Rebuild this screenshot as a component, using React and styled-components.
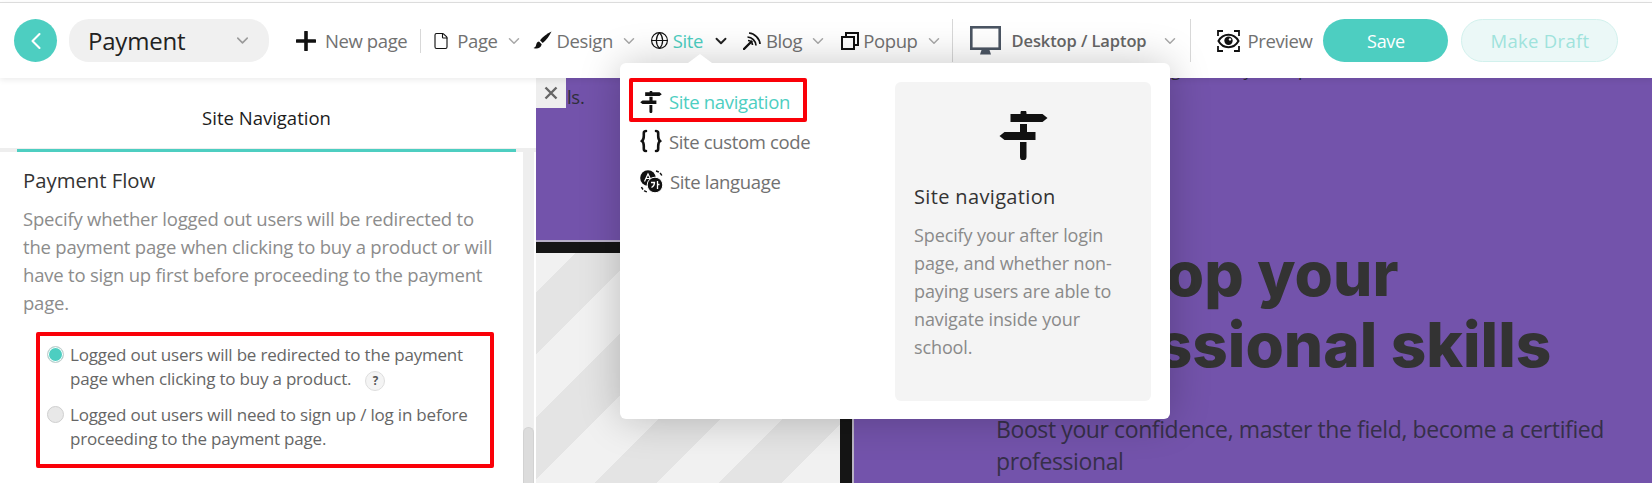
import React from "react";
import styled, { createGlobalStyle } from "styled-components";
import { ChevronDown, ChevronLeft, File, Globe } from "lucide-react";

const Global = createGlobalStyle`
  html, body { margin: 0; padding: 0; background: #fff; }
  body { font-family: "Open Sans", "Noto Sans", sans-serif; overflow: hidden; }
  * { box-sizing: border-box; }
`;

const TEAL = "#4dcec1";
const PURPLE = "#7353ab";

const Page = styled.div`
  position: relative;
  width: 1652px;
  height: 483px;
  overflow: hidden;
  display: flex;
  flex-direction: column;
  padding-top: 2px;
`;
const Header = styled.header`
  position: relative;
  z-index: 2;
  height: 76px;
  flex: none;
  border-top: 1px solid #dcdcdc;
  background: #fff;
  box-shadow: 0 2px 6px rgba(0, 0, 0, 0.08);
  display: flex;
  align-items: center;
  padding: 0 0 0 14px;
`;
const Back = styled.button`
  width: 43px;
  height: 43px;
  border: 0;
  padding: 0;
  border-radius: 50%;
  background: ${TEAL};
  color: #fff;
  display: flex;
  align-items: center;
  justify-content: center;
`;
const PagePill = styled.div`
  width: 200px;
  height: 43px;
  margin-left: 12px;
  border-radius: 20px;
  background: #f0f0f0;
  display: flex;
  align-items: center;
  justify-content: space-between;
  padding: 0 17px 0 19px;
  font-size: 24px;
  letter-spacing: -0.2px;
  color: #222;
`;
const NavItem = styled.div`
  display: flex;
  align-items: center;
  margin-left: ${(p) => p.$ml || 0}px;
  font-size: 18.5px;
  letter-spacing: -0.4px;
  color: ${(p) => (p.$active ? TEAL : "#717171")};
  white-space: nowrap;
  svg.glyph { flex: none; color: #111; margin-right: ${(p) => p.$gap ?? 5}px; }
`;
const Caret = styled(ChevronDown)`
  flex: none;
  margin-left: ${(p) => p.$ml ?? 10}px;
  color: ${(p) => (p.$dark ? "#222" : "#a8a8a8")};
`;
const VLine = styled.div`
  width: 1px;
  height: ${(p) => p.$h}px;
  margin-left: ${(p) => p.$ml}px;
  background: #d8d8d8;
  flex: none;
`;
const DeviceLabel = styled.span`
  font-size: 16.5px;
  font-weight: 600;
  letter-spacing: -0.1px;
  color: #666;
`;
const Save = styled.button`
  width: 125px;
  height: 43px;
  margin-left: 11px;
  border: 0;
  border-radius: 22px;
  background: ${TEAL};
  color: #fff;
  font: 18px "Open Sans", sans-serif;
  letter-spacing: -0.3px;
`;
const Draft = styled.button`
  width: 157px;
  height: 43px;
  margin-left: 13px;
  border: 1px solid #d2f1ed;
  border-radius: 22px;
  background: #ebf8f7;
  color: #9fe3dc;
  font: 18.5px "Open Sans", sans-serif;
  letter-spacing: 0.3px;
`;
const Body = styled.main`
  flex: 1;
  min-height: 0;
  display: flex;
`;
const Side = styled.aside`
  width: 536px;
  flex: none;
  display: flex;
  flex-direction: column;
  background: #fff;
`;
const TabRow = styled.div`
  height: 74px;
  flex: none;
  padding: 0 0 0 17px;
  border-bottom: 4px solid #eeeeee;
  position: relative;
`;
const Tab = styled.div`
  width: 499px;
  height: 74px;
  border-bottom: 3px solid ${TEAL};
  display: flex;
  align-items: center;
  justify-content: center;
  padding-top: 7px;
  font-size: 18.5px;
  letter-spacing: 0;
  color: #1c1c1c;
`;
const SideBody = styled.div`
  flex: 1;
  min-height: 0;
  display: flex;
`;
const Settings = styled.div`
  flex: 1;
  padding: 15px 0 0 23px;
`;
const H3 = styled.h3`
  margin: 0;
  font-size: 20.3px;
  line-height: 26px;
  font-weight: 400;
  letter-spacing: 0;
  color: #333;
`;
const Desc = styled.p`
  margin: 12px 0 0;
  width: 470px;
  font-size: 18.5px;
  line-height: 28px;
  letter-spacing: -0.2px;
  color: #8c8c8c;
`;
const RedBox = styled.div`
  width: 458px;
  height: 136px;
  margin: 15px 0 0 13px;
  border: 4px solid #fa0008;
  border-radius: 2px;
  padding: 7px 0 0 7px;
  display: flex;
  flex-direction: column;
  gap: 12px;
`;
const Option = styled.div`
  display: flex;
  gap: 6px;
  font-size: 17px;
  line-height: 24px;
  letter-spacing: -0.2px;
  color: #666;
`;
const Radio = styled.span`
  width: 17px;
  height: 17px;
  flex: none;
  margin-top: 3px;
  border-radius: 50%;
  border: 1px solid #cfcfcf;
  background: ${(p) => (p.$on ? TEAL : "#e8e8e8")};
  box-shadow: inset 0 0 0 ${(p) => (p.$on ? 1 : 0)}px #fff;
`;
const Help = styled.span`
  display: inline-flex;
  width: 20px;
  height: 20px;
  margin-left: 14px;
  vertical-align: 0;
  border-radius: 50%;
  border: 1px solid #dedede;
  background: #f4f4f4;
  align-items: center;
  justify-content: center;
  font-size: 11.5px;
  font-weight: 700;
  line-height: 1;
  letter-spacing: 0;
  color: #555;
`;
const Track = styled.div`
  width: 11px;
  margin-right: 2px;
  background: #eeeeee;
  display: flex;
  flex-direction: column;
  justify-content: flex-end;
`;
const Thumb = styled.div`
  height: 56px;
  border-radius: 6px 6px 0 0;
  background: #dcdcdc;
  border: 1px solid #d2d2d2;
  border-bottom: 0;
`;
const Canvas = styled.section`
  position: relative;
  flex: 1;
  min-width: 0;
  background: ${PURPLE};
  display: flex;
  overflow: hidden;
`;
const Close = styled.div`
  position: absolute;
  top: 0;
  left: 0;
  width: 30px;
  height: 30px;
  background: #eeeeee;
  color: #666;
  display: flex;
  align-items: center;
  justify-content: center;
`;
const LeftCol = styled.div`
  width: 316px;
  flex: none;
  display: flex;
  flex-direction: column;
`;
const CutEnd = styled.p`
  margin: 5px 0 0 31px;
  height: 27px;
  font-size: 18.5px;
  line-height: 27px;
  letter-spacing: -0.3px;
  color: #2f2f3a;
`;
const Media = styled.div`
  margin-top: 130px;
  flex: 1;
  border-top: 2px solid #b8b0c8;
  box-shadow: 2px 0 0 #b9b3c4;
`;
const MediaInner = styled.div`
  height: 100%;
  border-top: 11px solid #151515;
  border-right: 12px solid #151515;
  background: repeating-linear-gradient(
    135deg,
    #f1f1f1 -16px,
    #f1f1f1 28px,
    #e4e4e4 28px,
    #e4e4e4 72px
  );
`;
const RightCol = styled.div`
  flex: 1;
  min-width: 0;
  padding-left: 144px;
  color: #333;
`;
const Clipped = styled.p`
  margin: -22px 0 0 175px;
  height: 27px;
  font-size: 17px;
  line-height: 27px;
  word-spacing: 14px;
  color: #2f2f3a;
  white-space: nowrap;
`;
const Hero = styled.h1`
  margin: 155px 0 0 -3px;
  width: 640px;
  font-family: Inter, "Open Sans", sans-serif;
  font-size: 62px;
  line-height: 71px;
  font-weight: 800;
  letter-spacing: 0;
  color: #333;
`;
const Sub = styled.p`
  margin: 33px 0 0;
  width: 620px;
  font-size: 23px;
  line-height: 32px;
  letter-spacing: -0.4px;
  color: #362f49;
`;
const Menu = styled.div`
  position: absolute;
  z-index: 5;
  left: 620px;
  top: 63px;
  width: 550px;
  height: 356px;
  background: #fff;
  border-radius: 6px;
  box-shadow: 0 0 40px rgba(0, 0, 0, 0.22);
  display: flex;
  padding: 15px 0 0 9px;
  &::before {
    content: "";
    position: absolute;
    left: 68px;
    top: -9px;
    border-left: 12px solid transparent;
    border-right: 12px solid transparent;
    border-bottom: 9px solid #fff;
  }
`;
const MenuList = styled.div`
  width: 266px;
  flex: none;
`;
const MenuRow = styled.div`
  width: ${(p) => (p.$boxed ? "178px" : "auto")};
  height: ${(p) => (p.$boxed ? "44px" : "40px")};
  display: flex;
  align-items: center;
  gap: 7px;
  padding-left: ${(p) => (p.$boxed ? "7px" : "11px")};
  padding-top: ${(p) => (p.$boxed ? "3px" : "0")};
  padding-bottom: ${(p) => (p.$boxed ? "0" : "2px")};
  border: ${(p) => (p.$boxed ? "4px solid #fa0008" : "0")};
  border-radius: 2px;
  font-size: 18.5px;
  letter-spacing: -0.35px;
  color: ${(p) => (p.$active ? TEAL : "#717171")};
  white-space: nowrap;
  svg { flex: none; color: #111; }
`;
const Info = styled.div`
  width: 256px;
  height: 319px;
  margin-top: 4px;
  background: #f4f4f4;
  border-radius: 6px;
  padding: 29px 19px 0;
`;
const InfoIcon = styled.div`
  display: flex;
  justify-content: center;
  margin-bottom: 24px;
`;
const InfoTitle = styled.div`
  font-size: 20px;
  line-height: 26px;
  font-weight: 500;
  letter-spacing: 0.35px;
  color: #333;
`;
const InfoText = styled.p`
  margin: 11px 0 0;
  font-size: 18px;
  line-height: 28px;
  letter-spacing: -0.12px;
  color: #8a8a8a;
`;

const Plus = () => (
  <svg className="glyph" width="20" height="20" viewBox="0 0 20 20">
    <path d="M10 1v18M1 10h18" stroke="#111" strokeWidth="3.6" strokeLinecap="round" />
  </svg>
);
const Brush = () => (
  <svg className="glyph" width="19" height="19" viewBox="0 0 19 19">
    <path d="M18.5.5C14 2.5 9.5 6 7 9.3l2.7 2.7C13 9.5 16.5 5 18.5.5Z" fill="#111" />
    <path d="M6 10.4c-2.3.5-2.6 2.4-3 4-.2 1-1.2 1.9-2.5 2.6 3.2 1.2 7.500.4 8.200-3.800Z" fill="#111" />
  </svg>
);
const Feed = () => (
  <svg className="glyph" width="18" height="18" viewBox="0 0 18 18" fill="none" stroke="#111">
    <path d="M6 1c5.500.3 10.700 5.500 11 11" strokeWidth="1.700" />
    <path d="M4.500 5c4.500.2 8.300 4 8.500 8.500" strokeWidth="1.700" />
    <path d="M1 17l7.500-7.500" strokeWidth="2.400" strokeLinecap="round" />
    <path d="M5 8.500c2.400.2 4.300 2.100 4.500 4.500" strokeWidth="1.700" />
  </svg>
);
const Popup = () => (
  <svg className="glyph" width="18" height="18" viewBox="0 0 18 18" fill="none" stroke="#111" strokeWidth="2">
    <rect x="1" y="5" width="12" height="12" />
    <path d="M5 5V1h12v12h-4" />
  </svg>
);
const Monitor = () => (
  <svg className="glyph" width="31" height="30" viewBox="0 0 31 30">
    <rect x="1.300" y="1.300" width="28.400" height="21.400" fill="#fff" stroke="#4b5563" strokeWidth="2.600" />
    <path d="M11.500 24h8l1.500 4.500H10Z" fill="#4b5563" />
  </svg>
);
const Eye = () => (
  <svg className="glyph" width="23" height="22" viewBox="0 0 23 22" fill="none">
    <path d="M1 6V1h5M17 1h5v5M22 16v5h-5M6 21H1v-5" stroke="#111" strokeWidth="1.800" />
    <path d="M1.500 11C4 6.500 7.500 4.800 11.500 4.800S19 6.500 21.500 11c-2.500 4.500-6 6.200-10 6.200S4 15.500 1.500 11Z" stroke="#111" strokeWidth="2" fill="#fff" />
    <circle cx="11.500" cy="10.800" r="4.200" fill="#111" />
    <circle cx="13" cy="9.400" r="1.200" fill="#fff" />
  </svg>
);
const Signpost = ({ size = 22 }) => (
  <svg width={size} height={size} viewBox="0 0 48 49" fill="#111">
    <path d="M11 3h10V2a3 3 0 0 1 6 0v1h16l5 4-5 4H11Z" />
    <path d="M20.500 13h7v8H36v8H5l-5-4 5-4h15.500Z" />
    <path d="M20.500 31h6.500v15a3.250 3.250 0 0 1-6.500 0Z" />
  </svg>
);
const Braces = () => (
  <svg width="22" height="24" viewBox="0 0 22 24" fill="none" stroke="#111" strokeWidth="2.600" strokeLinecap="round">
    <path d="M6 2C3.500 2 3.800 3.500 3.800 6s.2 4.500-1.800 6c2 1.500 1.800 3.500 1.800 6s-.3 4 2.200 4" />
    <path d="M16 2c2.500 0 2.200 1.500 2.200 4s-.2 4.500 1.800 6c-2 1.500-1.800 3.500-1.800 6s.3 4-2.200 4" />
  </svg>
);
const Lang = () => (
  <svg width="23" height="23" viewBox="0 0 23 23">
    <circle cx="8" cy="8" r="7.800" fill="#111" />
    <path d="M4.500 11.500 8 4l3 6M5.500 8.500h4.500" stroke="#fff" strokeWidth="1.200" fill="none" />
    <path d="M16 1c3 .6 5 2.600 6 5M1.500 17c1 2.500 3 4.500 6 5" stroke="#111" strokeWidth="1.500" fill="none" strokeDasharray="3 1.500" />
    <circle cx="15" cy="15" r="7.800" fill="#111" stroke="#fff" strokeWidth="1" />
    <path d="M11 12.500h3.500c0 2.500-1 4-3 5M17.500 11v8M17.500 14.500h2" stroke="#fff" strokeWidth="1.300" fill="none" />
  </svg>
);

export default function App() {
  return (
    <Page>
      <Global />
      <Header>
        <Back aria-label="Back"><ChevronLeft size={28} strokeWidth={1.8} /></Back>
        <PagePill>
          Payment
          <ChevronDown size={19} color="#9a9a9a" strokeWidth={2} />
        </PagePill>
        <NavItem $ml={27} $gap={9}><Plus />New page</NavItem>
        <VLine $h={24} $ml={13} />
        <NavItem $ml={11} $gap={7}>
          <File className="glyph" size={18} strokeWidth={1.500} />Page<Caret size={18} $ml={7} />
        </NavItem>
        <NavItem $ml={10} $gap={5}>
          <Brush />Design<Caret size={18} $ml={7} />
        </NavItem>
        <NavItem $ml={12} $gap={4}>
          <Globe className="glyph" size={19} strokeWidth={1.500} />
          <NavItem $active>Site</NavItem>
          <Caret size={18} $dark $ml={9} strokeWidth={2.500} />
        </NavItem>
        <NavItem $ml={13} $gap={5}>
          <Feed />Blog<Caret size={18} $ml={7} />
        </NavItem>
        <NavItem $ml={14} $gap={4}>
          <Popup />Popup<Caret size={18} $ml={7} />
        </NavItem>
        <VLine $h={43} $ml={9} />
        <NavItem $ml={17} $gap={11}>
          <Monitor /><DeviceLabel>Desktop / Laptop</DeviceLabel><Caret size={18} $ml={14} />
        </NavItem>
        <VLine $h={43} $ml={11} />
        <NavItem $ml={26} $gap={8}><Eye />Preview</NavItem>
        <Save>Save</Save>
        <Draft>Make Draft</Draft>
      </Header>
      <Body>
        <Side>
          <TabRow><Tab>Site Navigation</Tab></TabRow>
          <SideBody>
            <Settings>
              <H3>Payment Flow</H3>
              <Desc>
                Specify whether logged out users will be redirected to the payment page when clicking to buy a product or will have to sign up first before proceeding to the payment page.
              </Desc>
              <RedBox>
                <Option>
                  <Radio $on />
                  <span>
                    Logged out users will be redirected to the payment<br />
                    page when clicking to buy a product.<Help>?</Help>
                  </span>
                </Option>
                <Option>
                  <Radio />
                  <span>
                    Logged out users will need to sign up / log in before<br />
                    proceeding to the payment page.
                  </span>
                </Option>
              </RedBox>
            </Settings>
            <Track><Thumb /></Track>
          </SideBody>
        </Side>
        <Canvas>
          <Close>
            <svg width="14" height="14" viewBox="0 0 14 14">
              <path d="M1.500 1.500l11 11M12.500 1.500l-11 11" stroke="#666" strokeWidth="2.400" />
            </svg>
          </Close>
          <LeftCol>
            <CutEnd>ls.</CutEnd>
            <Media><MediaInner /></Media>
          </LeftCol>
          <RightCol>
            <Clipped>go to your path</Clipped>
            <Hero>Develop your professional skills</Hero>
            <Sub>Boost your confidence, master the field, become a certified professional</Sub>
          </RightCol>
        </Canvas>
      </Body>
      <Menu>
        <MenuList>
          <MenuRow $boxed $active><Signpost />Site navigation</MenuRow>
          <MenuRow><Braces />Site custom code</MenuRow>
          <MenuRow><Lang />Site language</MenuRow>
        </MenuList>
        <Info>
          <InfoIcon><Signpost size={49} /></InfoIcon>
          <InfoTitle>Site navigation</InfoTitle>
          <InfoText>Specify your after login page, and whether non-paying users are able to navigate inside your school.</InfoText>
        </Info>
      </Menu>
    </Page>
  );
}
